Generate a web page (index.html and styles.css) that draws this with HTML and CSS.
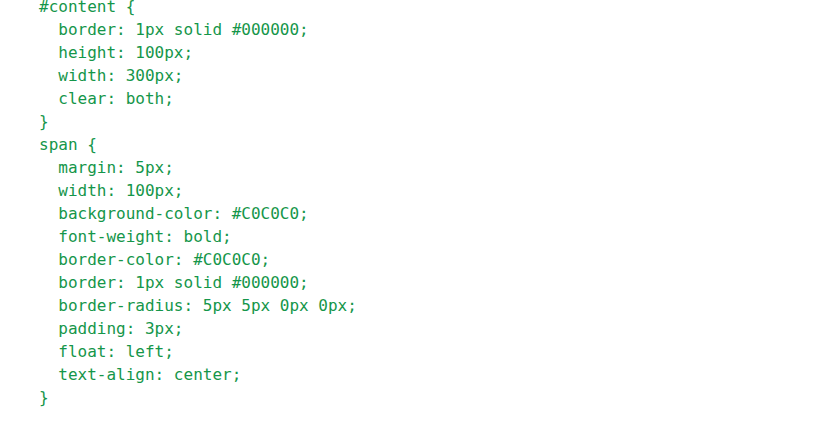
FILE: index.html
```html
<!DOCTYPE html>
<html>
<head>
<meta charset="utf-8">
<link rel="stylesheet" href="styles.css">
</head>
<body>
<pre class="code">#content {
  border: 1px solid #000000;
  height: 100px;
  width: 300px;
  clear: both;
}
span {
  margin: 5px;
  width: 100px;
  background-color: #C0C0C0;
  font-weight: bold;
  border-color: #C0C0C0;
  border: 1px solid #000000;
  border-radius: 5px 5px 0px 0px;
  padding: 3px;
  float: left;
  text-align: center;
}</pre>
</body>
</html>
```
FILE: styles.css
```css
html, body {
  margin: 0;
  padding: 0;
  background: #ffffff;
  overflow: hidden;
}
.code {
  margin: -5px 0 0 39px;
  font-family: "DejaVu Sans Mono", monospace;
  font-size: 16px;
  line-height: 23px;
  color: #15964a;
}
```
